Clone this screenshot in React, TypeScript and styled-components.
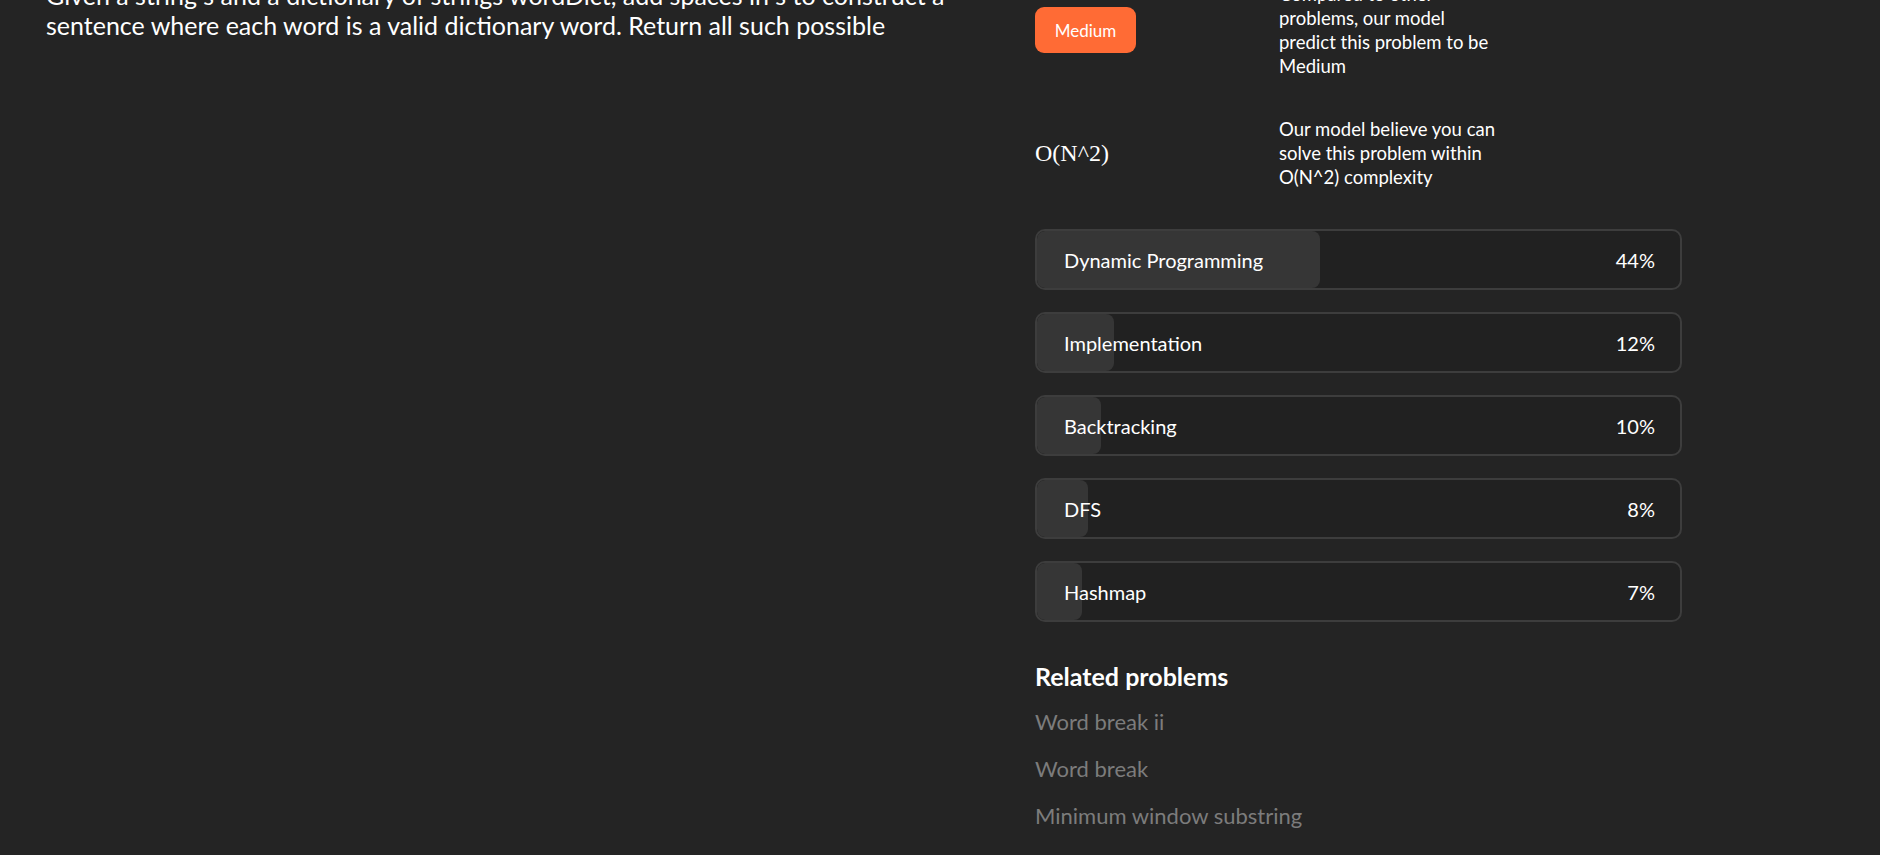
import React from "react";
import styled, { createGlobalStyle } from "styled-components";

const Global = createGlobalStyle`
  html, body { margin: 0; padding: 0; background: #242424; }
  body { font-family: Lato, "Noto Sans", sans-serif; color: #ffffff; overflow: hidden; }
  * { box-sizing: border-box; }
`;

const Page = styled.div`
  display: grid;
  grid-template-columns: 914px 647px;
  column-gap: 75px;
  padding: 0 198px 0 46px;
  margin-top: -20px;
  width: 1880px;
  height: 875px;
`;

const Statement = styled.p`
  margin: 0;
  font-size: 25px;
  line-height: 30px;
  white-space: nowrap;
`;

const Side = styled.div`
  display: flex;
  flex-direction: column;
`;

const InfoGrid = styled.div`
  display: grid;
  grid-template-columns: 244px 1fr;
  row-gap: 39px;
  align-items: center;
  margin-top: 2px;
`;

const Badge = styled.span`
  justify-self: start;
  display: inline-flex;
  align-items: center;
  justify-content: center;
  width: 101px;
  height: 46px;
  border-radius: 9px;
  background: #ff6b35;
  color: #fff;
  font-size: 17px;
`;

const Complexity = styled.span`
  font-family: "Liberation Serif", "DejaVu Serif", serif;
  font-size: 24px;
  color: #fff;
`;

const Note = styled.p`
  margin: 0;
  font-size: 18.5px;
  line-height: 24px;
  white-space: nowrap;
`;

const Bars = styled.div`
  display: flex;
  flex-direction: column;
  gap: 22px;
  margin-top: 40px;
`;

const Bar = styled.div`
  position: relative;
  display: flex;
  align-items: center;
  justify-content: space-between;
  height: 61px;
  padding: 0 25px 0 27px;
  border: 2px solid #3d3d3d;
  border-radius: 10px;
  background: #212121;
  font-size: 20px;
  overflow: hidden;
`;

const Fill = styled.div`
  position: absolute;
  left: 0;
  top: 0;
  bottom: 0;
  border-radius: 8px;
  background: #363636;
`;

const BarText = styled.span`
  position: relative;
  z-index: 1;
`;

const Heading = styled.h3`
  margin: 39px 0 0;
  font-size: 25px;
  line-height: 30px;
  font-weight: 700;
`;

const Links = styled.div`
  display: flex;
  flex-direction: column;
  gap: 17px;
  margin-top: 16px;
`;

const RelLink = styled.span`
  font-size: 22px;
  line-height: 30px;
  color: #7c7c7c;
`;

const tags = [
  { name: "Dynamic Programming", pct: 44 },
  { name: "Implementation", pct: 12 },
  { name: "Backtracking", pct: 10 },
  { name: "DFS", pct: 8 },
  { name: "Hashmap", pct: 7 },
];

const related = ["Word break ii", "Word break", "Minimum window substring"];

export default function App() {
  return (
    <>
      <Global />
      <Page>
        <div>
          <Statement>
            Given a string s and a dictionary of strings wordDict, add spaces in s to construct a
            <br />
            sentence where each word is a valid dictionary word. Return all such possible
          </Statement>
        </div>
        <Side>
          <InfoGrid>
            <Badge>Medium</Badge>
            <Note>
              Compared to other
              <br />
              problems, our model
              <br />
              predict this problem to be
              <br />
              Medium
            </Note>
            <Complexity>O(N^2)</Complexity>
            <Note>
              Our model believe you can
              <br />
              solve this problem within
              <br />
              O(N^2) complexity
            </Note>
          </InfoGrid>
          <Bars>
            {tags.map((t) => (
              <Bar key={t.name}>
                <Fill style={{ width: `${t.pct}%` }} />
                <BarText>{t.name}</BarText>
                <BarText>{t.pct}%</BarText>
              </Bar>
            ))}
          </Bars>
          <Heading>Related problems</Heading>
          <Links>
            {related.map((r) => (
              <RelLink key={r}>{r}</RelLink>
            ))}
          </Links>
        </Side>
      </Page>
    </>
  );
}
